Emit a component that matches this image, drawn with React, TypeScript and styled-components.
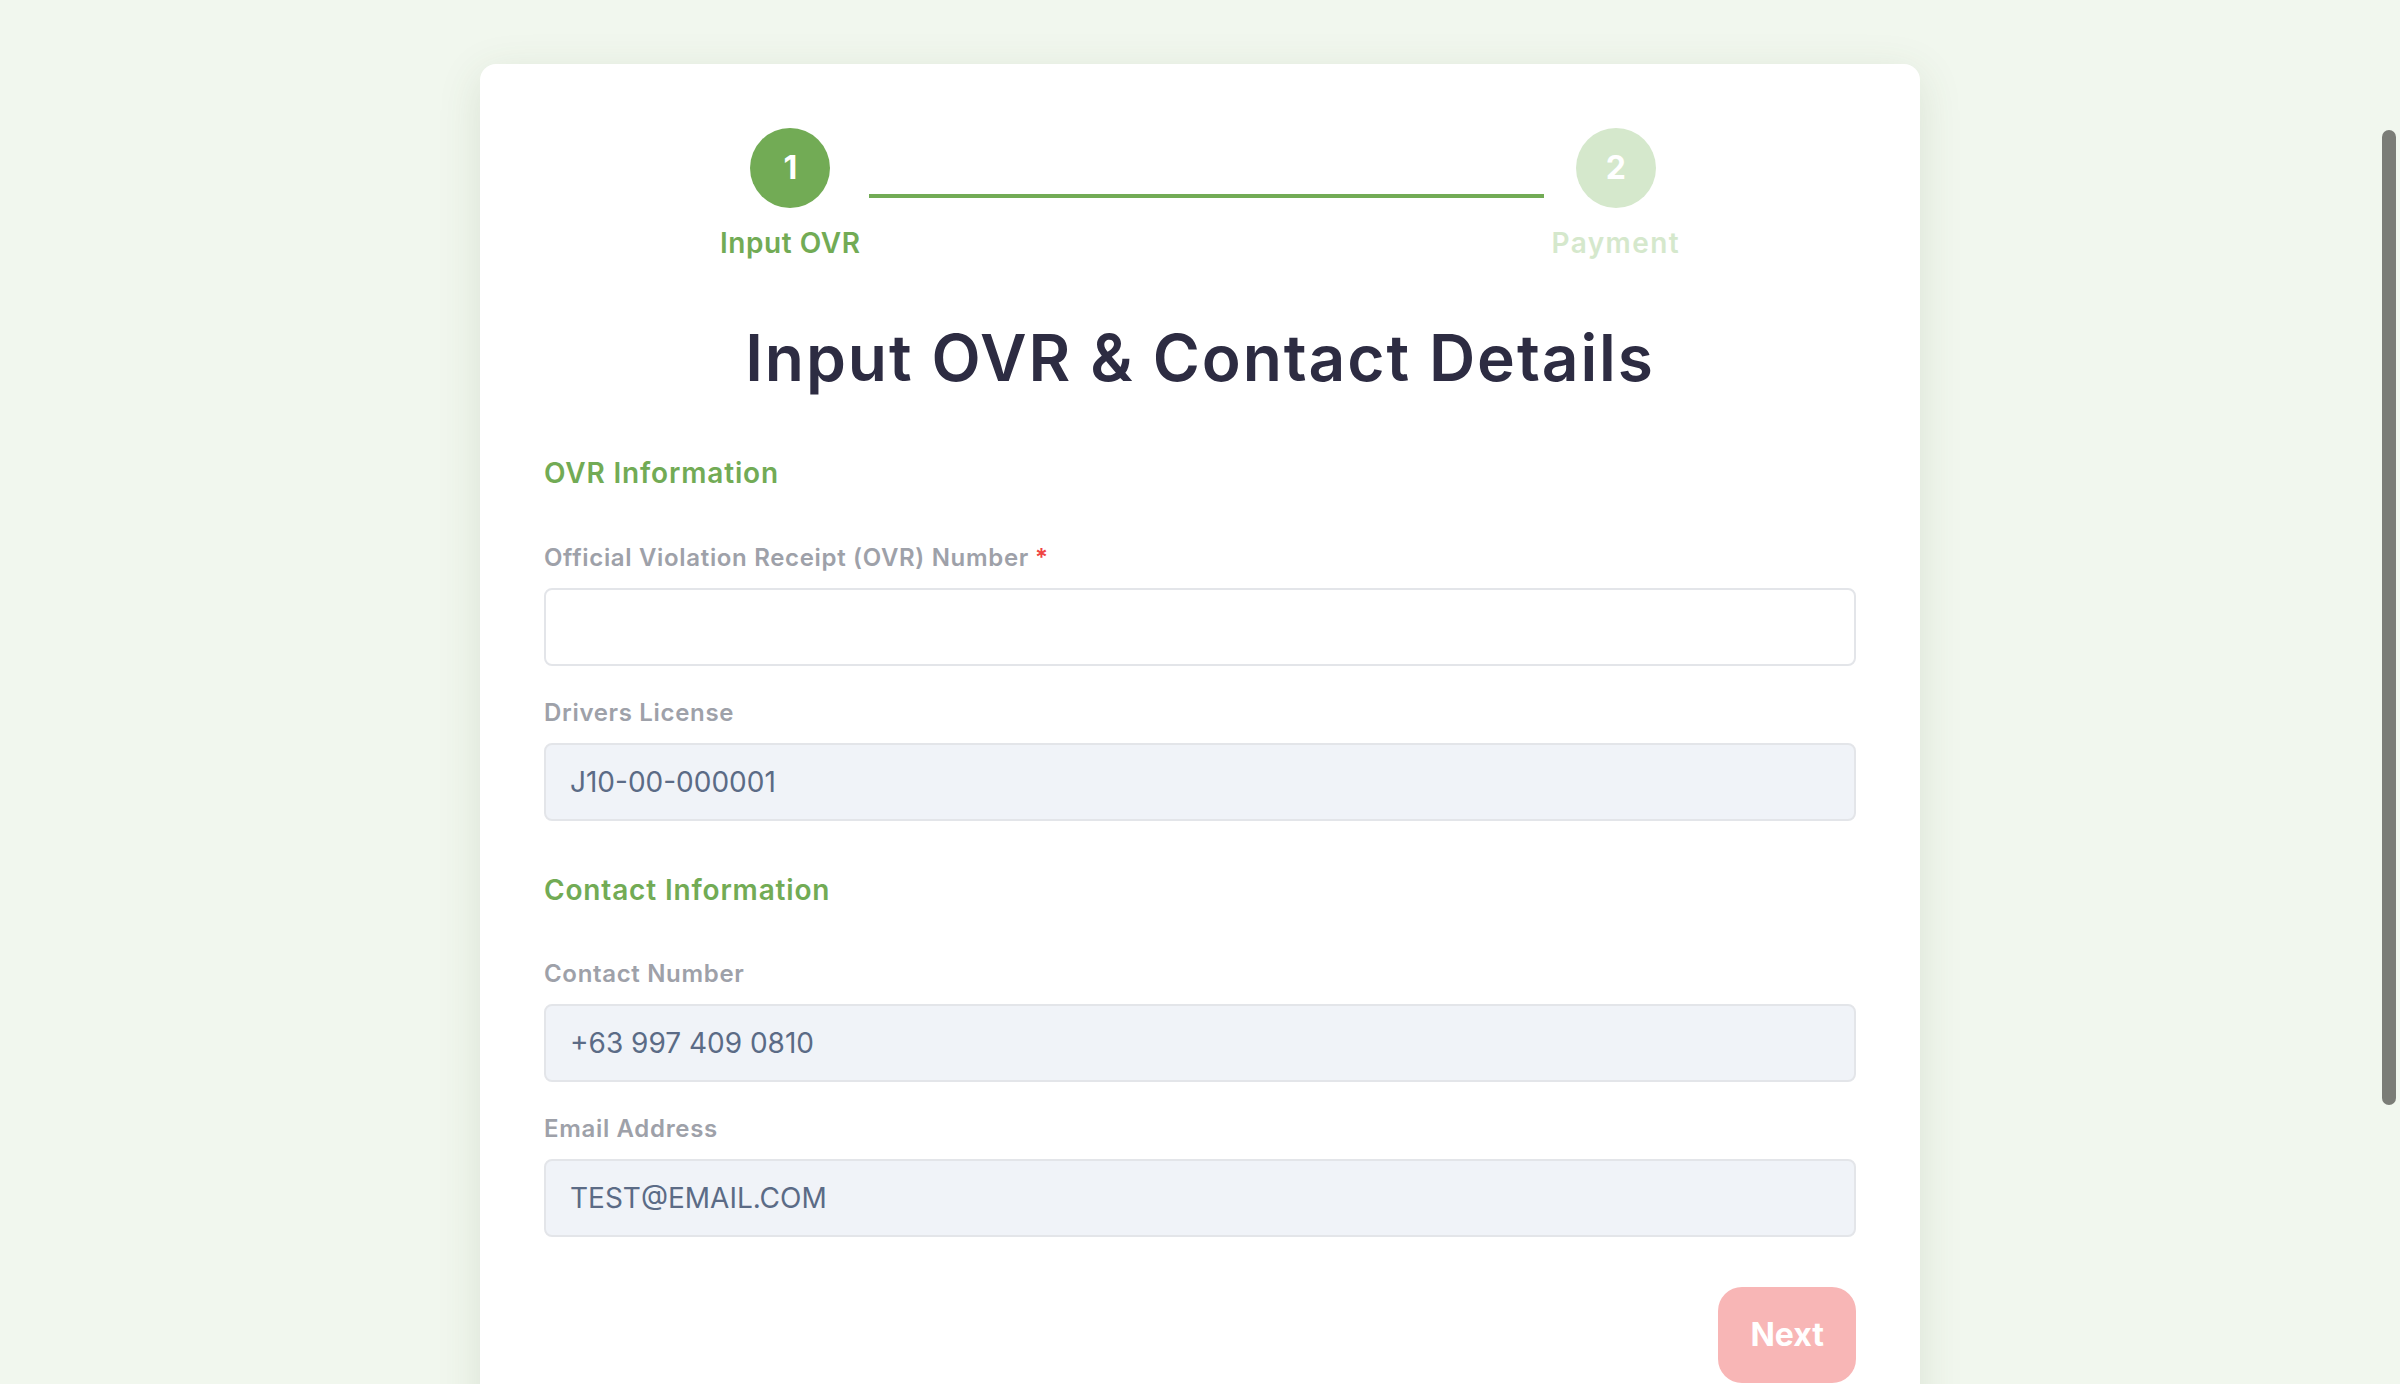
import React from "react";
import styled, { createGlobalStyle } from "styled-components";

const GlobalStyle = createGlobalStyle`
  html, body {
    margin: 0;
    padding: 0;
    overflow: hidden;
    background: #f1f7ee;
  }
  body {
    font-family: Inter, "Noto Sans", "Liberation Sans", sans-serif;
  }
  * { box-sizing: border-box; }
`;

const Page = styled.main`
  min-height: 100vh;
  padding: 64px 0 64px;
  display: flex;
  justify-content: center;
  align-items: flex-start;
`;

const Card = styled.section`
  width: 1440px;
  background: #ffffff;
  border-radius: 16px;
  padding: 64px;
  box-shadow: 0 10px 44px rgba(70, 90, 50, 0.13);
`;

const Stepper = styled.div`
  width: 960px;
  margin: 0 auto;
  display: flex;
  align-items: flex-start;
`;

const Step = styled.div`
  display: flex;
  flex-direction: column;
  align-items: center;
`;

const Circle = styled.div<{ $active: boolean }>`
  width: 80px;
  height: 80px;
  border-radius: 50%;
  display: flex;
  align-items: center;
  justify-content: center;
  background: ${(p) => (p.$active ? "#72ab55" : "#d5e8cc")};
  color: #ffffff;
  font-size: 32px;
  font-weight: 700;
  line-height: 1;
`;

const StepLabel = styled.div<{ $active: boolean }>`
  margin-top: 19px;
  font-size: 28px;
  line-height: 1.2;
  font-weight: 600;
  letter-spacing: ${(p) => (p.$active ? "0.02em" : "0.05em")};
  white-space: nowrap;
  color: ${(p) => (p.$active ? "#72ab55" : "#d5e8cc")};
`;

const Connector = styled.div`
  flex: 1;
  height: 4px;
  margin: 66px 8px 0;
  background: #72ab55;
`;

const Title = styled.h1`
  margin: 59px 0 61px;
  text-align: center;
  font-size: 64px;
  line-height: 1.2;
  font-weight: 600;
  letter-spacing: 0.03em;
  color: #2d2c42;
`;

const Section = styled.div`
  display: flex;
  flex-direction: column;
  gap: 33px;
  & + & {
    margin-top: 53px;
  }
`;

const SectionTitle = styled.h2`
  margin: 0 0 20px;
  font-size: 28px;
  line-height: 1.2;
  font-weight: 600;
  letter-spacing: 0.03em;
  color: #72ab55;
`;

const Field = styled.label`
  display: flex;
  flex-direction: column;
  gap: 15px;
`;

const FieldLabel = styled.span`
  font-size: 24px;
  line-height: 1.2;
  font-weight: 600;
  letter-spacing: 0.028em;
  color: #9ea1a9;
`;

const Required = styled.span`
  color: #ef4444;
  margin-left: 6px;
`;

const Input = styled.input<{ $filled: boolean }>`
  height: 78px;
  width: 100%;
  padding: 0 24px;
  border: 2px solid #e3e5e9;
  border-radius: 8px;
  background: ${(p) => (p.$filled ? "#f0f3f8" : "#ffffff")};
  font-family: inherit;
  font-size: 28px;
  color: #5b6b86;
  outline: none;
`;

const Actions = styled.div`
  margin-top: 50px;
  display: flex;
  justify-content: flex-end;
`;

const NextButton = styled.button`
  height: 96px;
  padding: 0 32px;
  border: none;
  border-radius: 24px;
  background: #f8b6b6;
  color: #ffffff;
  font-family: inherit;
  font-size: 32px;
  font-weight: 700;
  cursor: not-allowed;
`;

const ScrollThumb = styled.div`
  position: fixed;
  top: 130px;
  right: 4px;
  width: 14px;
  height: 975px;
  border-radius: 7px;
  background: #7b7d77;
`;

export default function App() {
  return (
    <>
      <GlobalStyle />
      <Page>
        <Card>
          <Stepper>
            <Step>
              <Circle $active>1</Circle>
              <StepLabel $active>Input OVR</StepLabel>
            </Step>
            <Connector />
            <Step>
              <Circle $active={false}>2</Circle>
              <StepLabel $active={false}>Payment</StepLabel>
            </Step>
          </Stepper>

          <Title>Input OVR &amp; Contact Details</Title>

          <Section>
            <SectionTitle>OVR Information</SectionTitle>
            <Field>
              <FieldLabel>
                Official Violation Receipt (OVR) Number<Required>*</Required>
              </FieldLabel>
              <Input $filled={false} defaultValue="" />
            </Field>
            <Field>
              <FieldLabel>Drivers License</FieldLabel>
              <Input $filled readOnly value="J10-00-000001" />
            </Field>
          </Section>

          <Section>
            <SectionTitle>Contact Information</SectionTitle>
            <Field>
              <FieldLabel>Contact Number</FieldLabel>
              <Input $filled readOnly value="+63 997 409 0810" />
            </Field>
            <Field>
              <FieldLabel>Email Address</FieldLabel>
              <Input $filled readOnly value="TEST@EMAIL.COM" />
            </Field>
          </Section>

          <Actions>
            <NextButton disabled>Next</NextButton>
          </Actions>
        </Card>
      </Page>
      <ScrollThumb />
    </>
  );
}
